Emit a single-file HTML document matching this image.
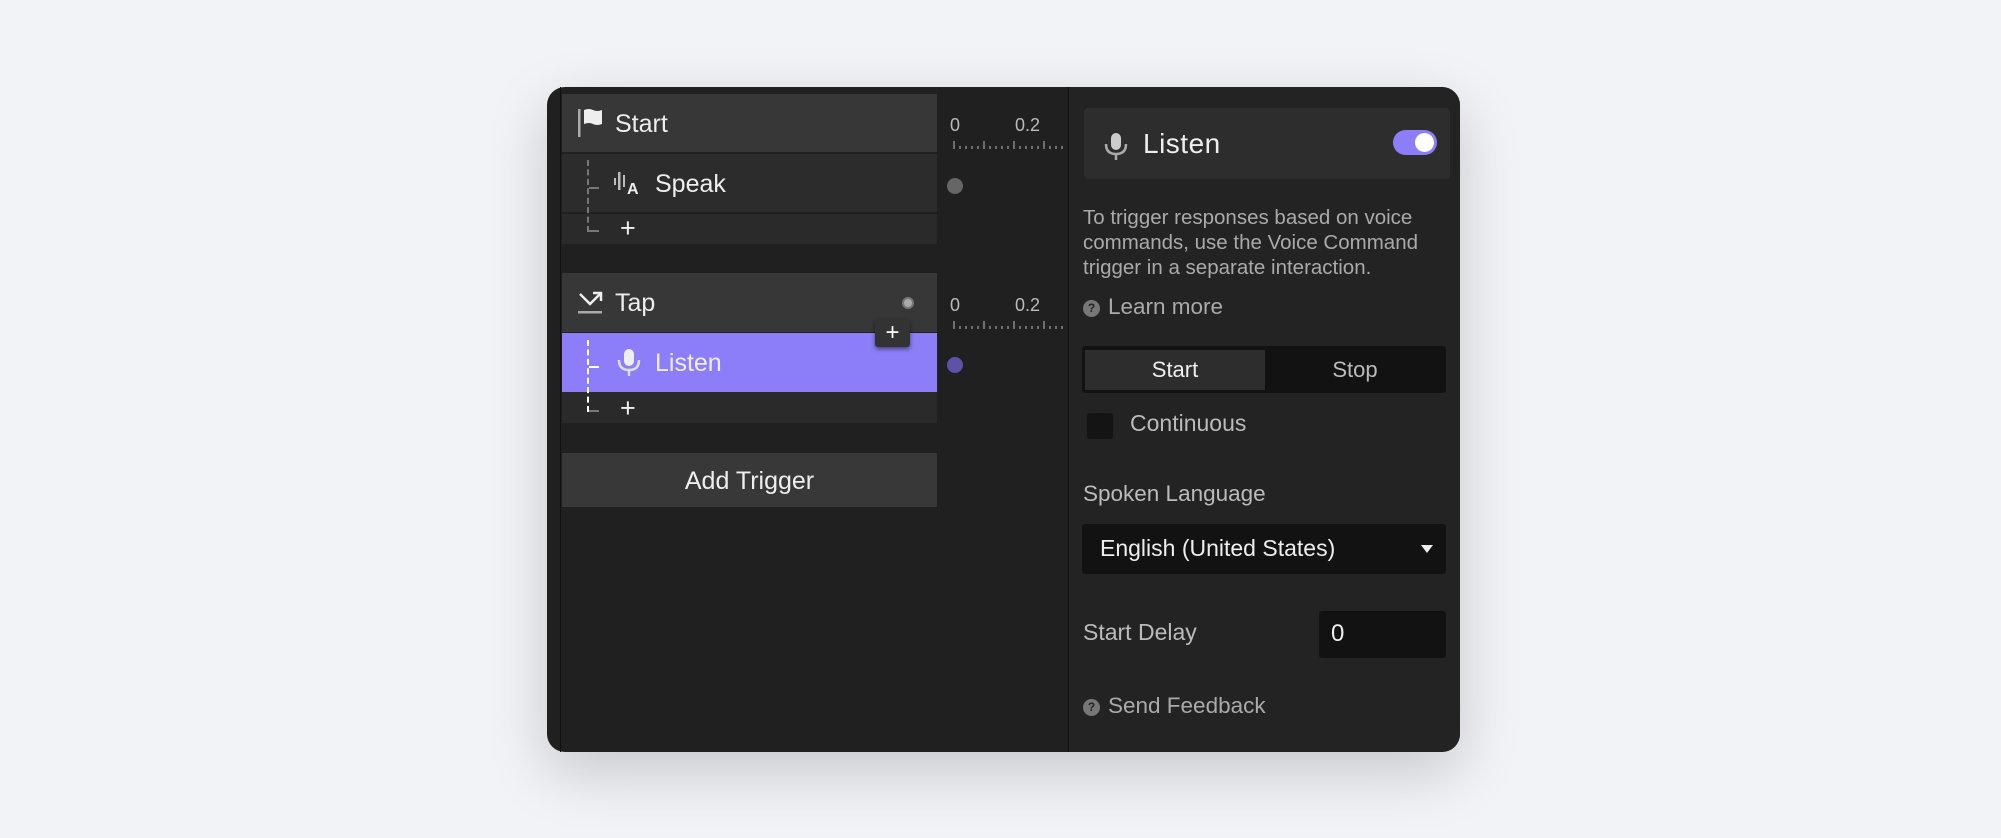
<!DOCTYPE html>
<html><head><meta charset="utf-8"><style>
*{box-sizing:border-box;margin:0;padding:0}
body{width:2001px;height:838px;background:#f2f3f7;position:relative;overflow:hidden;font-family:"Liberation Sans",Arial,sans-serif;color:#eee}
.a{position:absolute}
.panel{left:547px;top:87px;width:913px;height:665px;background:#202020;border-radius:18px;box-shadow:0 20px 60px rgba(0,0,0,.18);overflow:hidden}
.row{position:absolute;left:562px;width:375px}
.t{position:absolute;font-size:25px;line-height:1;white-space:nowrap}
.dash{position:absolute;border-left:2px dashed #777}
.hd{position:absolute;border-top:2px dashed #777;width:10px}
</style></head><body>
<div class="a panel"></div>
<div class="a" style="left:560px;top:87px;width:1px;height:665px;background:#111"></div>
<div class="a" style="left:1068px;top:87px;width:1px;height:665px;background:#111"></div>
<div class="a" style="left:1069px;top:87px;width:391px;height:665px;background:#232323;border-radius:0 18px 18px 0"></div>

<!-- Start group -->
<div class="row" style="top:94px;height:58px;background:#373737"></div>
<svg class="a" style="left:578px;top:108px" width="26" height="30" viewBox="0 0 26 30"><rect x="0" y="1" width="2.5" height="28" fill="#aaa"/><path d="M6 2 Q11 0 15 2 T24 2 V16 Q19 18 15 16 T6 16 Z" fill="#eee"/></svg>
<div class="t" style="left:615px;top:112px">Start</div>
<div class="row" style="top:154px;height:58px;background:#2c2c2c"></div>
<div class="row" style="top:214px;height:30px;background:#2a2a2a"></div>
<div class="dash" style="left:587px;top:160px;height:72px"></div>
<div class="hd" style="left:589px;top:187px"></div>
<div class="hd" style="left:589px;top:230px"></div>
<svg class="a" style="left:614px;top:172px" width="32" height="24" viewBox="0 0 32 24"><rect x="0" y="6" width="2" height="7" fill="#bbb"/><rect x="4" y="0" width="2.5" height="18" fill="#bbb"/><rect x="9" y="3" width="2" height="12" fill="#bbb"/><text x="13" y="22" font-family="Liberation Sans" font-weight="bold" font-size="16" fill="#eee">A</text></svg>
<div class="t" style="left:655px;top:172px">Speak</div>
<div class="t" style="left:620px;top:215px;font-size:27px">+</div>

<!-- Tap group -->
<div class="row" style="top:273px;height:59px;background:#373737"></div>
<svg class="a" style="left:578px;top:290px" width="28" height="26" viewBox="0 0 28 26"><path d="M2 4 L12 14 L22 4 M15 3 H23 V11" stroke="#eee" stroke-width="2.5" fill="none"/><rect x="0" y="21" width="24" height="2.5" fill="#aaa"/></svg>
<div class="t" style="left:615px;top:291px">Tap</div>
<div class="a" style="left:902px;top:297px;width:12px;height:12px;border-radius:50%;background:#aaa;border:2px solid #777"></div>
<div class="row" style="top:333px;height:59px;background:#8b7ef8"></div>
<div class="row" style="top:392px;height:31px;background:#2a2a2a"></div>
<div class="dash" style="left:587px;top:340px;height:72px;border-color:#fff"></div>
<div class="hd" style="left:589px;top:366px;border-color:#fff"></div>
<div class="hd" style="left:589px;top:410px"></div>
<svg class="a" style="left:616px;top:348px" width="26" height="30" viewBox="0 0 26 30"><rect x="8" y="1" width="10" height="17" rx="5" fill="#eee"/><path d="M3 12 Q3 22 13 22 Q23 22 23 12 M13 22 V28" stroke="#ddd" stroke-width="2.5" fill="none"/></svg>
<div class="t" style="left:655px;top:351px">Listen</div>
<div class="t" style="left:620px;top:395px;font-size:27px">+</div>
<div class="a" style="left:875px;top:319px;width:35px;height:28px;background:#333;border-radius:3px;box-shadow:0 2px 4px rgba(0,0,0,.5);color:#fff;font-size:24px;text-align:center;line-height:28px">+</div>

<div class="row" style="top:453px;height:54px;background:#383838"></div>
<div class="t" style="left:562px;width:375px;text-align:center;top:469px">Add Trigger</div>

<!-- Timelines -->
<div class="t" style="left:950px;top:116px;font-size:18px;color:#bbb">0</div>
<div class="t" style="left:1015px;top:116px;font-size:18px;color:#bbb">0.2</div>
<div class="t" style="left:950px;top:296px;font-size:18px;color:#bbb">0</div>
<div class="t" style="left:1015px;top:296px;font-size:18px;color:#bbb">0.2</div>
<svg class="a" style="left:952px;top:140px" width="116" height="10"><g stroke="#888" stroke-width="1.5"><path d="M2 1V9M8 6V9M14 6V9M20 6V9M26 6V9M32 1V9M38 6V9M44 6V9M50 6V9M56 6V9M62 1V9M68 6V9M74 6V9M80 6V9M86 6V9M92 1V9M98 6V9M104 6V9M110 6V9"/></g></svg>
<svg class="a" style="left:952px;top:320px" width="116" height="10"><g stroke="#888" stroke-width="1.5"><path d="M2 1V9M8 6V9M14 6V9M20 6V9M26 6V9M32 1V9M38 6V9M44 6V9M50 6V9M56 6V9M62 1V9M68 6V9M74 6V9M80 6V9M86 6V9M92 1V9M98 6V9M104 6V9M110 6V9"/></g></svg>
<div class="a" style="left:947px;top:178px;width:16px;height:16px;border-radius:50%;background:#666"></div>
<div class="a" style="left:947px;top:357px;width:16px;height:16px;border-radius:50%;background:#5c52a8"></div>

<!-- Right panel -->
<div class="a" style="left:1084px;top:108px;width:366px;height:71px;background:#2d2d2d;border-radius:4px"></div>
<svg class="a" style="left:1103px;top:132px" width="26" height="30" viewBox="0 0 26 30"><rect x="8" y="1" width="10" height="17" rx="5" fill="#ccc"/><path d="M3 12 Q3 22 13 22 Q23 22 23 12 M13 22 V28" stroke="#aaa" stroke-width="2.5" fill="none"/></svg>
<div class="t" style="left:1143px;top:130px;font-size:28px;letter-spacing:.5px">Listen</div>
<div class="a" style="left:1393px;top:130px;width:44px;height:25px;border-radius:13px;background:#8b7ef8"></div>
<div class="a" style="left:1415px;top:133px;width:19px;height:19px;border-radius:50%;background:#fff"></div>

<div class="a" style="left:1083px;top:205px;width:360px;font-size:20.5px;line-height:25px;color:#aaa">To trigger responses based on voice commands, use the Voice Command trigger in a separate interaction.</div>
<div class="a" style="left:1083px;top:300px;width:17px;height:17px;border-radius:50%;background:#777;color:#222;font-size:12px;font-weight:bold;text-align:center;line-height:17px">?</div>
<div class="t" style="left:1108px;top:296px;font-size:22.5px;color:#aaa">Learn more</div>

<div class="a" style="left:1082px;top:346px;width:364px;height:47px;background:#121212;border-radius:3px"></div>
<div class="a" style="left:1085px;top:350px;width:180px;height:40px;background:#2d2d2d"></div>
<div class="t" style="left:1085px;width:180px;text-align:center;top:359px;font-size:22px">Start</div>
<div class="t" style="left:1265px;width:180px;text-align:center;top:359px;font-size:22px;color:#bbb">Stop</div>

<div class="a" style="left:1087px;top:413px;width:26px;height:26px;background:#141414;border-radius:3px"></div>
<div class="t" style="left:1130px;top:412px;font-size:23px;color:#bbb">Continuous</div>

<div class="t" style="left:1083px;top:483px;font-size:22.5px;color:#bbb">Spoken Language</div>
<div class="a" style="left:1082px;top:524px;width:364px;height:50px;background:#121212;border-radius:3px"></div>
<div class="t" style="left:1100px;top:537px;font-size:23px;color:#eee">English (United States)</div>
<svg class="a" style="left:1420px;top:544px" width="14" height="10"><path d="M1 1H13L7 9Z" fill="#eee"/></svg>

<div class="t" style="left:1083px;top:621px;font-size:23px;color:#bbb">Start Delay</div>
<div class="a" style="left:1319px;top:611px;width:127px;height:47px;background:#121212;border-radius:3px"></div>
<div class="t" style="left:1331px;top:622px;font-size:24px;color:#eee">0</div>

<div class="a" style="left:1083px;top:699px;width:17px;height:17px;border-radius:50%;background:#777;color:#222;font-size:12px;font-weight:bold;text-align:center;line-height:17px">?</div>
<div class="t" style="left:1108px;top:695px;font-size:22.5px;color:#aaa">Send Feedback</div>
</body></html>
